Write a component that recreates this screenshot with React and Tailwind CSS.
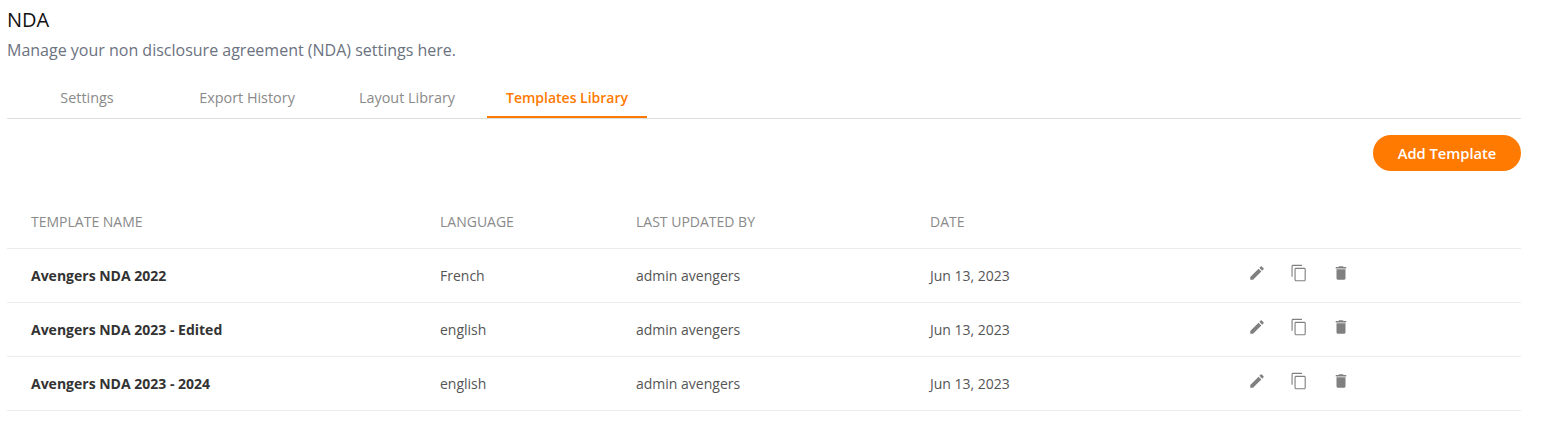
const rows = [
  { name: "Avengers NDA 2022", lang: "French" },
  { name: "Avengers NDA 2023 - Edited", lang: "english" },
  { name: "Avengers NDA 2023 - 2024", lang: "english" },
];
const cols = "grid grid-cols-[409px_196px_294px_317.5px_1fr]";

function Edit() {
  return (
    <svg width="18" height="18" viewBox="0 0 24 24" fill="#808080">
      <path d="M3 17.25V21h3.75L17.81 9.94l-3.75-3.75L3 17.25zM20.71 7.04a1 1 0 0 0 0-1.41l-2.34-2.34a1 1 0 0 0-1.41 0l-1.83 1.83 3.75 3.75 1.83-1.83z" />
    </svg>
  );
}
function Copy() {
  return (
    <svg width="18" height="18" viewBox="0 0 24 24" fill="#808080">
      <path d="M16 1H4c-1.1 0-2 .9-2 2v14h1.5V2.5H16V1zm3 4H8c-1.1 0-2 .9-2 2v14c0 1.1.9 2 2 2h11c1.1 0 2-.9 2-2V7c0-1.1-.9-2-2-2zm.5 16.5h-12v-15h12v15z" />
    </svg>
  );
}
function Trash() {
  return (
    <svg width="18" height="18" viewBox="0 0 24 24" fill="#808080">
      <path d="M6 19c0 1.1.9 2 2 2h8c1.1 0 2-.9 2-2V7H6v12zM19 4h-3.5l-1-1h-5l-1 1H5v2h14V4z" />
    </svg>
  );
}

export default function App() {
  return (
    <div className="w-[1543px] h-[437px] bg-white pl-[7px] pr-[22px] pt-[8px] font-['Open_Sans',sans-serif] overflow-hidden">
      <h1 className="text-[20px] leading-[23px] text-[#111111]">NDA</h1>
      <p className="mt-[8px] text-[16px] leading-[22px] text-[#6b7280]">
        Manage your non disclosure agreement (NDA) settings here.
      </p>
      <div className="mt-[16px] flex h-[42px] border-b border-[#dedede] text-[14.4px]">
        {["Settings", "Export History", "Layout Library"].map((t) => (
          <div key={t} className="w-[160px] flex items-center justify-center text-[#8a8a8a]">
            {t}
          </div>
        ))}
        <div className="w-[160px] h-[41px] pt-[2px] flex items-center justify-center border-b-2 border-[#ff7a00] text-[14px] font-semibold text-[#ff7a00]">
          Templates Library
        </div>
      </div>
      <div className="mt-[16px] flex justify-end">
        <button className="w-[148px] h-[36px] rounded-full bg-[#ff7a00] text-white text-[14.7px] font-semibold">
          Add Template
        </button>
      </div>
      <div className={`${cols} mt-[27px] h-[51px] items-center pl-[24px] pb-[4px] border-b border-[#ececec] text-[14px] text-[#8a8a8a]`}>
        <div>TEMPLATE NAME</div>
        <div>LANGUAGE</div>
        <div>LAST UPDATED BY</div>
        <div>DATE</div>
        <div />
      </div>
      {rows.map((r) => (
        <div key={r.name} className={`${cols} h-[54px] items-center pl-[24px] border-b border-[#ececec] text-[14px] text-[#555555]`}>
          <div className="font-bold text-[#333333]">{r.name}</div>
          <div>{r.lang}</div>
          <div>admin avengers</div>
          <div>Jun 13, 2023</div>
          <div className="flex gap-[24px] -mt-[6px]">
            <Edit />
            <Copy />
            <Trash />
          </div>
        </div>
      ))}
    </div>
  );
}
